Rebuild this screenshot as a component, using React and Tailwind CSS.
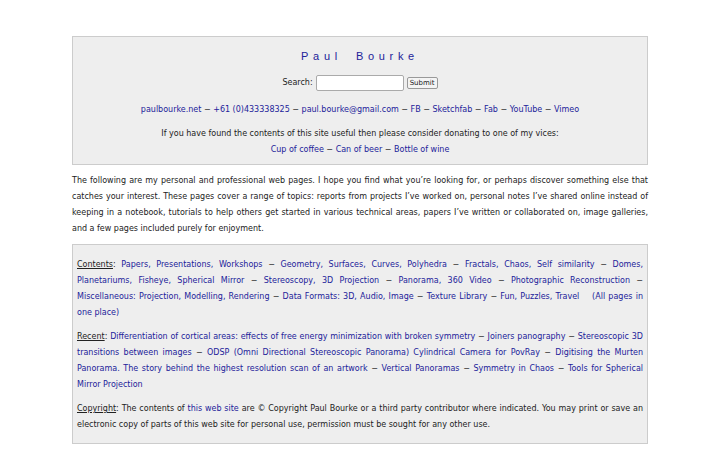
const linkCls = "text-[#22229a] no-underline";

const Sep = () => <span> − </span>;

const links = ["paulbourke.net", "+61 (0)433338325", "paul.bourke@gmail.com", "FB", "Sketchfab", "Fab", "YouTube", "Vimeo"];
const contents = [
  "Papers, Presentations, Workshops",
  "Geometry, Surfaces, Curves, Polyhedra",
  "Fractals, Chaos, Self similarity",
  "Domes, Planetariums, Fisheye, Spherical Mirror",
  "Stereoscopy, 3D Projection",
  "Panorama, 360 Video",
  "Photographic Reconstruction",
  "Miscellaneous: Projection, Modelling, Rendering",
  "Data Formats: 3D, Audio, Image",
  "Texture Library",
  "Fun, Puzzles, Travel",
];
const recent = [
  "Differentiation of cortical areas: effects of free energy minimization with broken symmetry",
  "Joiners panography",
  "Stereoscopic 3D transitions between images",
  "ODSP (Omni Directional Stereoscopic Panorama) Cylindrical Camera for PovRay",
  "Digitising the Murten Panorama. The story behind the highest resolution scan of an artwork",
  "Vertical Panoramas",
  "Symmetry in Chaos",
  "Tools for Spherical Mirror Projection",
];

const joined = (items) =>
  items.map((t, i) => (
    <span key={i}>
      {i > 0 && <Sep />}
      <a className={linkCls}>{t}</a>
    </span>
  ));

export default function App() {
  return (
    <div className="min-h-[450px] bg-white font-['DejaVu_Sans',sans-serif] text-[8px] leading-[16px] text-[#222]">
      <div className="w-[576px] mx-auto pt-9">
        {/* header box */}
        <div className="bg-[#eeeeee] border border-[#cccccc] text-center pt-[10px] pb-[6px]">
          <div className="flex justify-center font-['Liberation_Sans',sans-serif] text-[11px] tracking-[4.7px] text-[#22229a] leading-[18px]">
            <span>Paul</span>
            <span className="w-[14px]" />
            <span>Bourke</span>
          </div>
          <div className="flex items-center justify-center gap-[3px] mt-[10px]">
            <span>Search:</span>
            <input className="w-[88px] h-[16px] bg-white border border-[#aaa] rounded-[2px]" />
            <button className="h-[12px] w-[31px] text-[7px] leading-[10px] bg-[#f4f4f4] border border-[#999] rounded-[2px]">
              Submit
            </button>
          </div>
          <div className="mt-[11px]">{joined(links)}</div>
          <div className="mt-2">
            If you have found the contents of this site useful then please consider donating to one of my vices:
          </div>
          <div>{joined(["Cup of coffee", "Can of beer", "Bottle of wine"])}</div>
        </div>

        {/* intro */}
        <p className="text-justify mt-2">
          The following are my personal and professional web pages. I hope you find what you’re looking for, or
          perhaps discover something else that catches your interest. These pages cover a range of topics: reports
          from projects I’ve worked on, personal notes I’ve shared online instead of keeping in a notebook, tutorials
          to help others get started in various technical areas, papers I’ve written or collaborated on, image
          galleries, and a few pages included purely for enjoyment.
        </p>

        {/* index box */}
        <div className="bg-[#eeeeee] border border-[#cccccc] mt-[7px] px-[4px] pt-3 pb-[10px] text-justify">
          <p>
            <span className="underline">Contents</span>: {joined(contents)}&nbsp;&nbsp;&nbsp;&nbsp;
            <a className={linkCls}>(All pages in one place)</a>
          </p>
          <p className="mt-2">
            <span className="underline">Recent</span>: {joined(recent)}
          </p>
          <p className="mt-2">
            <span className="underline">Copyright</span>: The contents of <a className={linkCls}>this web site</a> are
            © Copyright Paul Bourke or a third party contributor where indicated. You may print or save an electronic
            copy of parts of this web site for personal use, permission must be sought for any other use.
          </p>
        </div>
      </div>
    </div>
  );
}
